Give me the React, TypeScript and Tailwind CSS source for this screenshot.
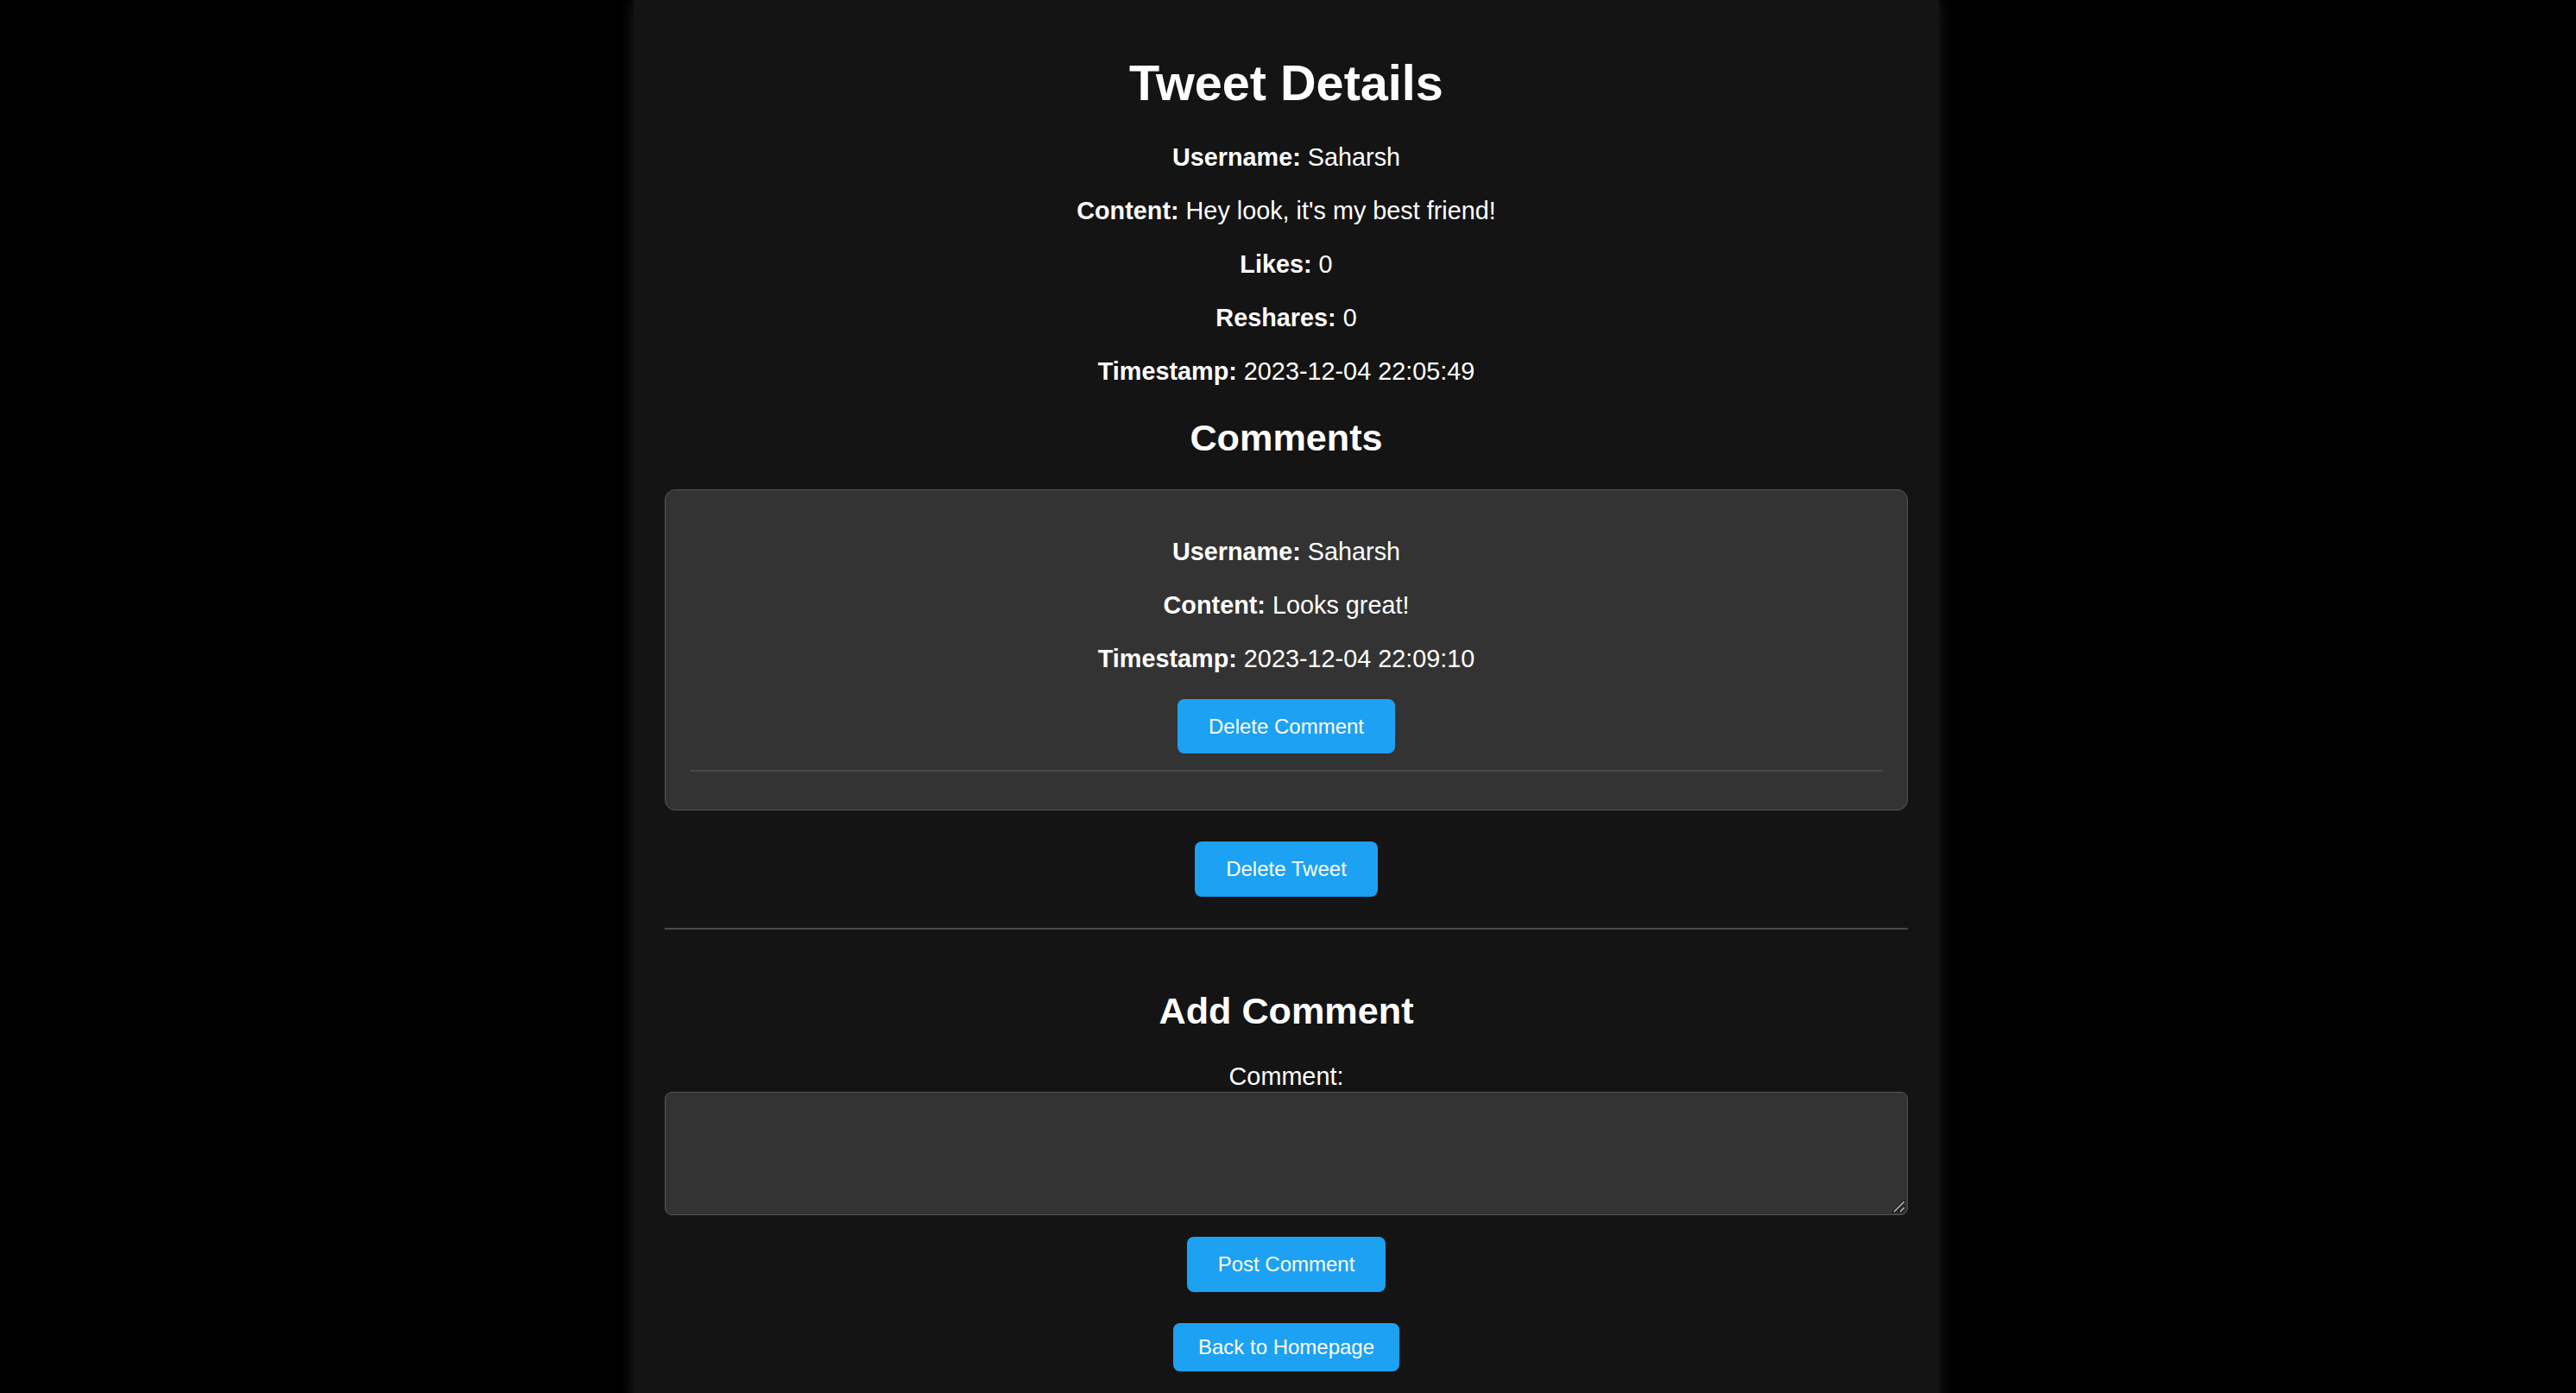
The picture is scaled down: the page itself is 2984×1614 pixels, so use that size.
import React from "react";

const btn =
  "bg-[#1da1f2] text-white text-[24px] leading-[28px] rounded-[8px] px-[36px] flex items-center justify-center";

function Field({ label, value }: { label: string; value: string }) {
  return (
    <p className="text-[28.8px] leading-[32px] text-white text-center">
      <strong className="font-bold">{label}:</strong> {value}
    </p>
  );
}

export default function App() {
  return (
    <div
      className="min-h-screen w-full bg-black flex justify-center pr-[4px]"
      style={{ fontFamily: '"Liberation Sans", Arial, Helvetica, sans-serif' }}
    >
      <div className="w-[1512px] min-h-[1614px] bg-[#141414] px-[36px] pt-[64px] pb-[40px] shadow-[0_0_18px_rgba(34,34,34,0.9)] flex flex-col items-center text-white">
        <h1 className="text-[57.6px] leading-[64px] font-bold text-center">Tweet Details</h1>
        <div className="mt-[38px] flex flex-col gap-[30px]">
          <Field label="Username" value="Saharsh" />
          <Field label="Content" value="Hey look, it's my best friend!" />
          <Field label="Likes" value="0" />
          <Field label="Reshares" value="0" />
          <Field label="Timestamp" value="2023-12-04 22:05:49" />
        </div>
        <h2 className="mt-[37px] text-[43.2px] leading-[48px] font-bold text-center">Comments</h2>

        <div className="mt-[36px] w-full bg-[#333333] border border-[#555555] rounded-[12px] px-[28px] pt-[55px] pb-[44px] flex flex-col items-center">
          <div className="flex flex-col gap-[30px]">
            <Field label="Username" value="Saharsh" />
            <Field label="Content" value="Looks great!" />
            <Field label="Timestamp" value="2023-12-04 22:09:10" />
          </div>
          <button className={`${btn} mt-[31px] h-[63px]`}>Delete Comment</button>
          <div className="mt-[19px] w-full h-[2px] bg-[#4a4a4a]" />
        </div>

        <button className={`${btn} mt-[36px] h-[64px]`}>Delete Tweet</button>
        <div className="mt-[36px] w-full h-[2px] bg-[#4a4a4a]" />

        <h2 className="mt-[70px] text-[43.2px] leading-[48px] font-bold text-center">Add Comment</h2>
        <label className="mt-[36px] text-[28.8px] leading-[32px] text-center">Comment:</label>
        <div className="relative mt-[2px] w-full">
          <textarea className="block w-full h-[143px] bg-[#333333] border border-[#555555] rounded-[8px] text-white text-[28px] p-[10px] outline-none resize-none" />
          <svg
            className="absolute right-[3px] bottom-[3px]"
            width="16"
            height="16"
            viewBox="0 0 16 16"
          >
            <line x1="3" y1="15" x2="15" y2="3" stroke="#111" strokeWidth="4" strokeLinecap="round" />
            <line x1="3" y1="15" x2="15" y2="3" stroke="#a0a0a0" strokeWidth="2" />
            <line x1="10" y1="15" x2="15" y2="10" stroke="#111" strokeWidth="4" strokeLinecap="round" />
            <line x1="10" y1="15" x2="15" y2="10" stroke="#a0a0a0" strokeWidth="2" />
          </svg>
        </div>
        <button className={`${btn} mt-[25px] h-[64px]`}>Post Comment</button>
        <button className={`${btn} mt-[36px] h-[56px] !px-[29px]`}>Back to Homepage</button>
      </div>
    </div>
  );
}
